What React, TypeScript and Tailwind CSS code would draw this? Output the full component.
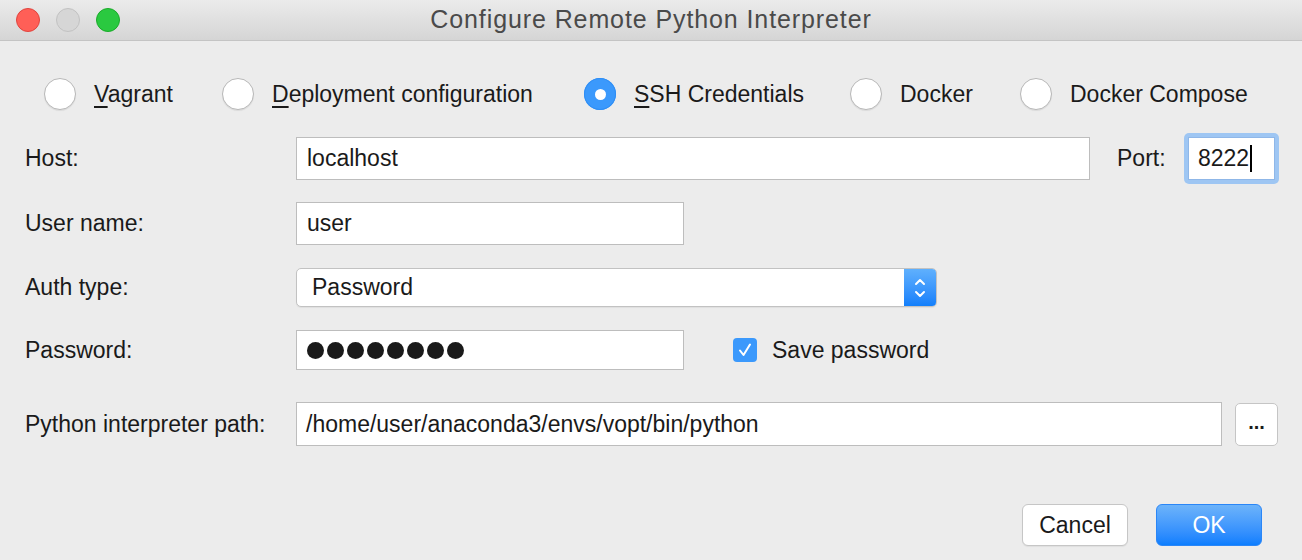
import React from 'react';

const font = { fontFamily: '"Liberation Sans", Arial, sans-serif' };

function Radio({ checked }: { checked?: boolean }) {
  if (checked) {
    return (
      <span className="flex h-[32px] w-[32px] shrink-0 items-center justify-center rounded-full bg-[#3b99fc] shadow-[inset_0_0_0_1px_#2f8ef5]">
        <span className="h-[11px] w-[11px] rounded-full bg-white" />
      </span>
    );
  }
  return (
    <span className="h-[32px] w-[32px] shrink-0 rounded-full border border-[#b8b8b8] bg-white shadow-[0_1px_1px_rgba(0,0,0,0.08)]" />
  );
}

function RadioOpt({ label, mn, checked, w }: { label: string; mn?: boolean; checked?: boolean; w: string }) {
  return (
    <div className={`flex shrink-0 items-center gap-[18px] ${w}`}>
      <Radio checked={checked} />
      <span className="whitespace-nowrap">
        {mn ? (
          <>
            <span className="underline decoration-[2px] underline-offset-[4px]">{label[0]}</span>
            {label.slice(1)}
          </>
        ) : (
          label
        )}
      </span>
    </div>
  );
}

const inputCls = 'flex items-center border border-[#bdbdbd] bg-white px-[10px] text-[23px] text-[#1a1a1a]';

export default function App() {
  return (
    <div className="h-[560px] w-[1302px] overflow-hidden bg-[#ececec] text-[23px] text-[#1a1a1a]" style={font}>
      {/* title bar */}
      <div className="relative flex h-[41px] items-center justify-center border-b border-[#c4c4c4] bg-gradient-to-b from-[#ebebeb] to-[#d5d5d5]">
        <div className="absolute left-[16px] top-[8px] flex gap-[16px]">
          <span className="h-[24px] w-[24px] rounded-full border border-[#e0443e] bg-[#ff5f57]" />
          <span className="h-[24px] w-[24px] rounded-full border border-[#c2c2c2] bg-[#d6d6d6]" />
          <span className="h-[24px] w-[24px] rounded-full border border-[#1aab29] bg-[#2ac940]" />
        </div>
        <span className="text-[25px] tracking-[0.9px] text-[#4a4a4a]">Configure Remote Python Interpreter</span>
      </div>

      {/* radio row */}
      <div className="mt-[37px] flex h-[32px] items-center pl-[44px]">
        <RadioOpt label="Vagrant" mn w="w-[178px]" />
        <RadioOpt label="Deployment configuration" mn w="w-[362px]" />
        <RadioOpt label="SSH Credentials" mn checked w="w-[266px]" />
        <RadioOpt label="Docker" w="w-[170px]" />
        <RadioOpt label="Docker Compose" w="w-[230px]" />
      </div>

      {/* Host */}
      <div className="mt-[27px] flex h-[43px] items-center pl-[25px]">
        <span className="w-[271px] shrink-0">Host:</span>
        <div className={`${inputCls} h-[43px] w-[794px]`}>localhost</div>
        <span className="ml-[27px] w-[67px] shrink-0">Port:</span>
        <div className="rounded-[5px] bg-[#9ec6f3] p-[4px]">
          <div className="flex h-[43px] w-[87px] items-center border border-[#8fb7e8] bg-white pl-[9px] text-[23px]">
            8222<span className="ml-[1px] h-[27px] w-[2px] bg-black" />
          </div>
        </div>
      </div>

      {/* User name */}
      <div className="mt-[22px] flex h-[43px] items-center pl-[25px]">
        <span className="w-[271px] shrink-0">User name:</span>
        <div className={`${inputCls} h-[43px] w-[388px]`}>user</div>
      </div>

      {/* Auth type */}
      <div className="mt-[23px] flex h-[39px] items-center pl-[25px]">
        <span className="w-[271px] shrink-0">Auth type:</span>
        <div className="flex h-[39px] w-[641px] overflow-hidden rounded-[5px] border border-[#c2c2c2] bg-white shadow-[0_1px_1px_rgba(0,0,0,0.06)]">
          <span className="flex flex-1 items-center pl-[15px]">Password</span>
          <span className="flex w-[32px] items-center justify-center bg-gradient-to-b from-[#5fb0fd] to-[#117ffb]">
            <svg width="14" height="26" viewBox="0 0 14 26" fill="none" stroke="white" strokeWidth="2" strokeLinecap="round" strokeLinejoin="round">
              <path d="M3 9 L7 5 L11 9" />
              <path d="M3 17 L7 21 L11 17" />
            </svg>
          </span>
        </div>
      </div>

      {/* Password */}
      <div className="mt-[23px] flex h-[40px] items-center pl-[25px]">
        <span className="w-[271px] shrink-0">Password:</span>
        <div className={`${inputCls} h-[40px] w-[388px] gap-[3px] pl-[10px]`}>
          {Array.from({ length: 8 }).map((_, i) => (
            <span key={i} className="h-[17px] w-[17px] rounded-full bg-[#1a1a1a]" />
          ))}
        </div>
        <span className="ml-[49px] flex h-[24px] w-[24px] items-center justify-center rounded-[4px] bg-[#3b99fc]">
          <svg width="16" height="16" viewBox="0 0 16 16" fill="none" stroke="white" strokeWidth="2" strokeLinecap="round" strokeLinejoin="round">
            <path d="M3 8.5 L6.5 13 L13 2.5" />
          </svg>
        </span>
        <span className="ml-[15px]">Save password</span>
      </div>

      {/* Python interpreter path */}
      <div className="mt-[32px] flex h-[44px] items-center pl-[25px]">
        <span className="w-[271px] shrink-0">Python interpreter path:</span>
        <div className={`${inputCls} h-[44px] w-[926px] pl-[9px]`}>/home/user/anaconda3/envs/vopt/bin/python</div>
        <div className="ml-[13px] flex h-[43px] w-[43px] items-center justify-center rounded-[5px] border border-[#c5c5c5] bg-white pb-[4px] text-[20px] font-bold">
          ...
        </div>
      </div>

      {/* buttons */}
      <div className="mt-[58px] flex justify-end gap-[28px] pr-[40px]">
        <div className="flex h-[42px] w-[106px] items-center justify-center rounded-[6px] border border-[#c6c6c6] bg-white shadow-[0_1px_1px_rgba(0,0,0,0.06)]">
          Cancel
        </div>
        <div className="flex h-[42px] w-[106px] items-center justify-center rounded-[6px] border border-[#2a86f7] bg-gradient-to-b from-[#6cb3fa] to-[#0a7efe] text-white">
          OK
        </div>
      </div>
    </div>
  );
}
